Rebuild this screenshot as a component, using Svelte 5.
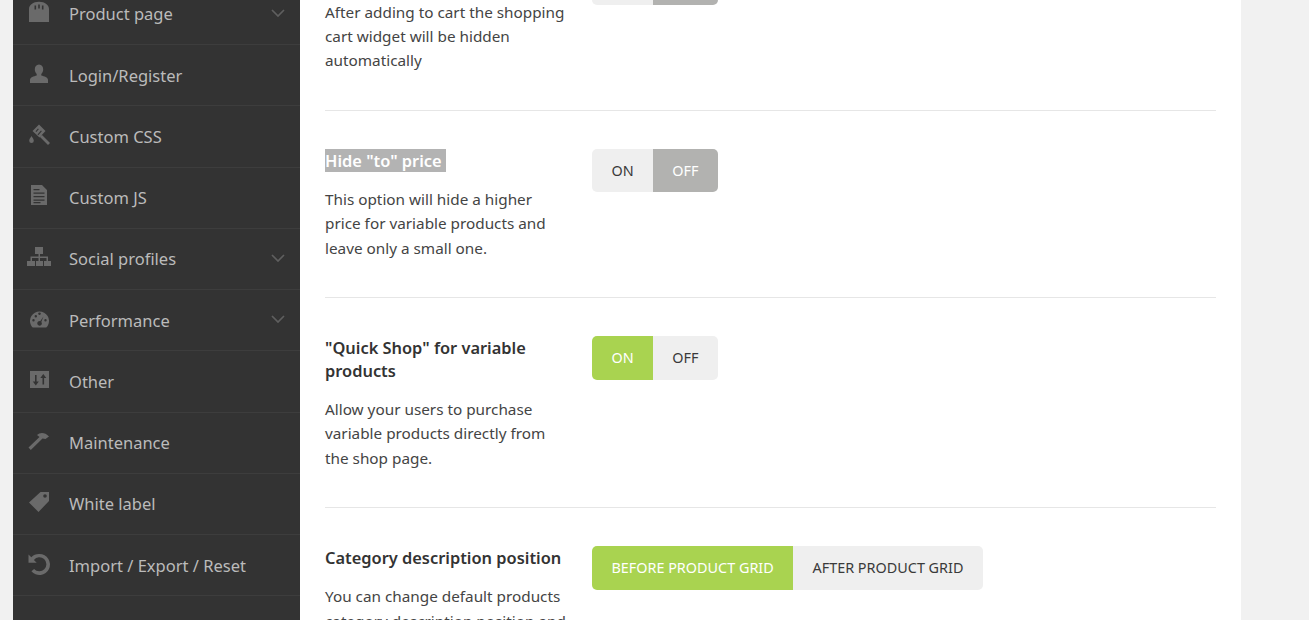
<script>
  // sidebar entries, icon key refers to the svg switch below
  const menu = [
    { label: "Product page", icon: "bag", arrow: true },
    { label: "Login/Register", icon: "user" },
    { label: "Custom CSS", icon: "brush" },
    { label: "Custom JS", icon: "file" },
    { label: "Social profiles", icon: "sitemap", arrow: true },
    { label: "Performance", icon: "gauge", arrow: true },
    { label: "Other", icon: "sort" },
    { label: "Maintenance", icon: "hammer" },
    { label: "White label", icon: "tag" },
    { label: "Import / Export / Reset", icon: "undo" }
  ];
</script>

<div class="page">
  <div class="wrap">
    <aside class="sidebar">
      {#each menu as item}
        <div class="item">
          <span class="icon">
            <svg viewBox="0 0 24 24" width="24" height="24" fill="#6a6a6a">
              {#if item.icon === "bag"}
                <path fill-rule="evenodd" d="M2 9C2 5 6 1.700 12 1.700S22 5 22 9V22H2zM7.500 5.500h1.600v4H7.500zM14.900 5.500h1.600v4h-1.600zM11.200 4.500h1.600v4h-1.600z" />
              {:else if item.icon === "user"}
                <path d="M12 2.500c2.800 0 4.200 2.200 4.200 4.800 0 2-.8 3.700-1.900 4.700v1.400c2.900.8 6.700 1.700 6.700 4.400V21H3v-3.200c0-2.700 3.800-3.600 6.700-4.400V12C8.600 11 7.800 9.300 7.800 7.300c0-2.600 1.400-4.800 4.200-4.800z" />
              {:else if item.icon === "brush"}
                <path fill-rule="evenodd" d="M12 1.500l6.500 6.500-6 6.500-7-6.500zM11 5.500 8.500 8.200l.8.8L11.800 6.300zM14 7.500l-3.500 4 .8.800 3.500-4zM15 12l8 8-2 2-8-8zM4.500 13c1.300 2 2.300 3.300 2.300 4.700a2.300 2.300 0 0 1-4.600 0C2.200 16.300 3.200 15 4.500 13z" />
              {:else if item.icon === "file"}
                <path fill-rule="evenodd" d="M4 1h11l5 5v15H4zM6.500 5v1.200h6V5zM6.500 8.500v1.200h11V8.500zM6.500 12v1.200h11V12zM6.500 15.500v1.200h11v-1.200zM6.500 18v1.200h7V18z" />
              {:else if item.icon === "sitemap"}
                <path d="M8 2h8v7h-3v2.500h8V16h3v5h-7v-5h2.500v-3H13v3h3v5H9v-5h2.500v-3H5v3h3v5H0v-5h3.500v-4.500h8V9H8z" />
              {:else if item.icon === "gauge"}
                <path fill-rule="evenodd" d="M12.500 4.500a9.500 9.500 0 0 1 8.500 13.800c-.4.900-1 1.700-1.800 2.200H5.800c-.8-.5-1.400-1.300-1.800-2.200A9.500 9.500 0 0 1 12.500 4.500zM6.500 12a1.200 1.200 0 1 0 0 2.400 1.200 1.200 0 0 0 0-2.400zM8.800 8a1.200 1.200 0 1 0 0 2.400 1.200 1.200 0 0 0 0-2.400zM13.600 7.200a1.200 1.200 0 1 0-2.200 0 1.200 1.200 0 0 0 2.200 0zM18.500 12a1.200 1.200 0 1 0 0 2.400 1.200 1.200 0 0 0 0-2.400zM16.500 9.500l-3.300 4.700a2.300 2.300 0 1 0 1.100.7z" />
              {:else if item.icon === "sort"}
                <path fill-rule="evenodd" d="M3 3h19v17H3zM8 7v6.500H5.800l3 4 3-4H9.600V7zM15.500 16.500V10h-2.200l3-4 3 4h-2.200v6.500z" />
              {:else if item.icon === "hammer"}
                <path d="M1.500 18.500 12.500 8 10 6C13 3 18 3 22 7.500L18.500 10 15.500 9.500 3.800 21z" />
              {:else if item.icon === "tag"}
                <path fill-rule="evenodd" d="M13.500 2H22v9L11.500 22 2 12.500zM18 4.200a1.800 1.800 0 1 0 0 3.600 1.800 1.800 0 0 0 0-3.600z" />
              {:else}
                <path d="M12.500 2a10.500 10.500 0 1 1-8.100 17.200l2.700-2.300a7 7 0 1 0-.2-8.900L9.700 10.800H1.500V2.500l2.800 2.800A10.500 10.500 0 0 1 12.500 2z" />
              {/if}
            </svg>
          </span>
          <span class="label">{item.label}</span>
          {#if item.arrow}
            <svg class="arrow" viewBox="0 0 14 8" width="14" height="8" fill="none" stroke="#5f5f5f" stroke-width="1.700">
              <path d="M1 1l6 6 6-6" />
            </svg>
          {/if}
        </div>
      {/each}
    </aside>

    <main class="content">
      <section class="row">
        <div class="info">
          <h4>Close cart widget</h4>
          <p>After adding to cart the shopping cart widget will be hidden automatically</p>
        </div>
        <div class="switch">
          <span class="opt">ON</span>
          <span class="opt off">OFF</span>
        </div>
      </section>

      <section class="row">
        <div class="info">
          <h4><span class="selected">Hide "to" price&nbsp;</span></h4>
          <p>This option will hide a higher price for variable products and leave only a small one.</p>
        </div>
        <div class="switch">
          <span class="opt">ON</span>
          <span class="opt off">OFF</span>
        </div>
      </section>

      <section class="row">
        <div class="info">
          <h4>"Quick Shop" for variable products</h4>
          <p>Allow your users to purchase variable products directly from the shop page.</p>
        </div>
        <div class="switch">
          <span class="opt on">ON</span>
          <span class="opt">OFF</span>
        </div>
      </section>

      <section class="row">
        <div class="info">
          <h4>Category description position</h4>
          <p>You can change default products category description position and</p>
        </div>
        <div class="switch">
          <span class="opt on">BEFORE PRODUCT GRID</span>
          <span class="opt">AFTER PRODUCT GRID</span>
        </div>
      </section>
    </main>
  </div>
</div>

<style>
  :global(body) {
    background: #f1f1f1;
    font-family: "Noto Sans", "Open Sans", sans-serif;
  }

  .page {
    height: 620px;
    overflow: hidden;
    padding-left: 13px;
    width: 1228px;
  }

  /* page is scrolled in the reference */
  .wrap {
    display: flex;
    margin-top: -76.4px;
    align-items: flex-start;
  }

  .sidebar {
    width: 287px;
    height: 760px;
    flex: none;
    box-sizing: border-box;
    padding-top: 60.15px;
    background: #333333;
  }

  .item {
    height: 60.25px;
    display: flex;
    align-items: center;
    border-bottom: 1px solid #3d3d3d;
    color: #bbb;
    font-size: 16.5px;
  }

  .icon {
    width: 56px;
    padding-left: 14px;
    box-sizing: border-box;
    display: flex;
    flex: none;
    margin-top: -3px;
  }

  .label {
    flex: 1;
  }

  .arrow {
    margin-right: 15px;
    margin-top: -2px;
  }

  .content {
    flex: 1;
    height: 760px;
    background: #fff;
    padding: 0 25px;
    color: #444;
  }

  .row {
    display: flex;
    gap: 24px;
    border-bottom: 1px solid #e6e6e6;
    padding: 38px 0 37px;
  }

  .info {
    width: 243px;
    flex: none;
  }

  h4 {
    margin: 0 0 15px;
    font-size: 16.4px;
    font-weight: 600;
    line-height: 23px;
    color: #333;
  }

  .selected {
    background: #b3b3b3;
    color: #fff;
  }

  p {
    margin: 0;
    font-size: 15.3px;
    line-height: 24.4px;
  }

  .switch {
    display: flex;
    border-radius: 5px;
    overflow: hidden;
    align-self: flex-start;
    font-size: 14.4px;
  }

  .opt {
    padding: 0 19.4px;
    height: 43.6px;
    line-height: 43.6px;
    background: #efefef;
    color: #3a3a3a;
  }

  .opt.off {
    background: #b2b2b0;
    color: #fff;
  }

  .opt.on {
    background: #a9d350;
    color: #fff;
  }
</style>
